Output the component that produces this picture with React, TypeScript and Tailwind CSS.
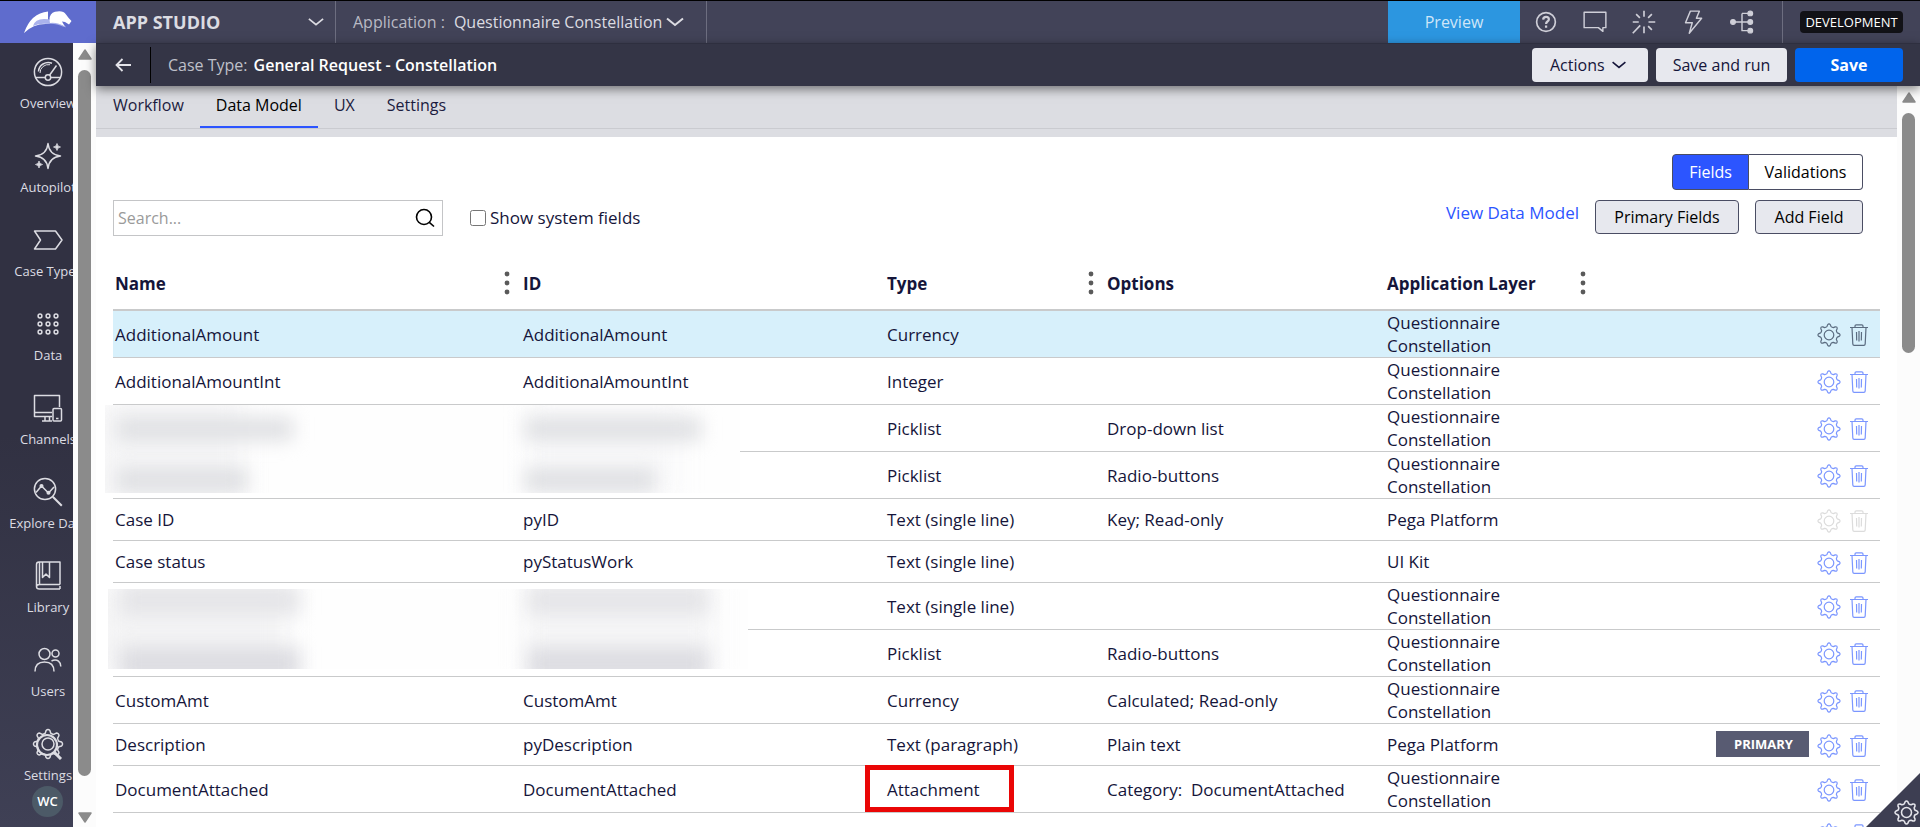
import type { ReactNode } from 'react';

type Tone = 'hover' | 'link' | 'disabled';

interface Field {
  name?: string;
  id?: string;
  type?: string;
  options?: string;
  layer?: string;
  tone?: Tone;
  primary?: boolean;
  marked?: boolean;
  mask?: 'first' | 'second';
}

const QC = 'Questionnaire Constellation';

const fields: Field[] = [
  { name: 'AdditionalAmount', id: 'AdditionalAmount', type: 'Currency', layer: QC, tone: 'hover' },
  { name: 'AdditionalAmountInt', id: 'AdditionalAmountInt', type: 'Integer', layer: QC },
  { type: 'Picklist', options: 'Drop-down list', layer: QC, mask: 'first' },
  { type: 'Picklist', options: 'Radio-buttons', layer: QC },
  { name: 'Case ID', id: 'pyID', type: 'Text (single line)', options: 'Key; Read-only', layer: 'Pega Platform', tone: 'disabled' },
  { name: 'Case status', id: 'pyStatusWork', type: 'Text (single line)', layer: 'UI Kit' },
  { type: 'Text (single line)', layer: QC, mask: 'second' },
  { type: 'Picklist', options: 'Radio-buttons', layer: QC },
  { name: 'CustomAmt', id: 'CustomAmt', type: 'Currency', options: 'Calculated; Read-only', layer: QC },
  { name: 'Description', id: 'pyDescription', type: 'Text (paragraph)', options: 'Plain text', layer: 'Pega Platform', primary: true },
  { name: 'DocumentAttached', id: 'DocumentAttached', type: 'Attachment', options: 'Category:\u00a0 DocumentAttached', layer: QC, marked: true },
  {},
];

const toneClass: Record<Tone, string> = {
  hover: 'text-[#5b6c80]',
  link: 'text-[#7b96ff]',
  disabled: 'text-[#dcdcdc]',
};

function gearPath(c: number, outer: number, inner: number) {
  const pt = (deg: number, r: number) => {
    const a = (deg * Math.PI) / 180;
    return `${(c + r * Math.sin(a)).toFixed(2)} ${(c - r * Math.cos(a)).toFixed(2)}`;
  };
  let d = '';
  for (let i = 0; i < 8; i++) {
    const a = i * 45;
    d += `${i === 0 ? 'M' : 'L'}${pt(a - 14, inner)}`;
    d += `L${pt(a - 8, outer - 0.8)}Q${pt(a, outer + 1)} ${pt(a + 8, outer - 0.8)}L${pt(a + 14, inner)}`;
    d += `Q${pt(a + 22.5, inner - 0.6)} ${pt(a + 31, inner)}`;
  }
  return d + 'Z';
}

const GEAR = gearPath(12, 11, 8.6);

function Gear({ className, stroke = 1.2 }: { className: string; stroke?: number }) {
  return (
    <svg viewBox="0 0 24 24" className={className} fill="none" stroke="currentColor" strokeWidth={stroke} strokeLinejoin="round" aria-hidden="true">
      <path d={GEAR} />
      <circle cx="12" cy="12" r="4.8" />
    </svg>
  );
}

function Trash() {
  return (
    <svg viewBox="0 0 20 24" className="h-6 w-5" fill="none" stroke="currentColor" strokeWidth="1.2" aria-hidden="true">
      <path d="M1 4.5h18M6 4.5V3q0-1.2 1.2-1.2h5.6Q14 1.8 14 3v1.5M3 4.5l.8 16.4q.1 1.4 1.3 1.4h9.8q1.2 0 1.3-1.4L17 4.5M7.5 9l.2 8.5M10 8v10.5M12.5 9l-.2 8.5" />
    </svg>
  );
}

function Chevron({ className }: { className: string }) {
  return (
    <svg viewBox="0 0 18 10" className={className} fill="none" stroke="currentColor" strokeWidth="2" aria-hidden="true">
      <path d="M1 1.5l8 6.5 8-6.5" />
    </svg>
  );
}

function LineIcon({ children, className = 'size-8' }: { children: ReactNode; className?: string }) {
  return (
    <svg viewBox="0 0 32 32" className={className} fill="none" stroke="currentColor" strokeWidth="1.5" strokeLinejoin="round" aria-hidden="true">
      {children}
    </svg>
  );
}

const nav: { label: string; icon: ReactNode }[] = [
  {
    label: 'Overview',
    icon: (
      <>
        <circle cx="16" cy="16" r="13.6" />
        <path d="M3.5 21.5h9.8M18.7 21.5h9.8M17.5 19.2L24.5 9.5M6.500 15.5q.3-5 4.5-7.500t9-.8" />
        <path d="M8 17q0-4 3-6.5t7-1.8" strokeWidth="1" />
        <circle cx="16" cy="21.5" r="2.7" />
      </>
    ),
  },
  {
    label: 'Autopilot',
    icon: (
      <>
        <path d="M16 3.5q1.2 11.3 12.5 12.5Q17.2 17.2 16 28.5 14.8 17.2 3.5 16 14.8 14.8 16 3.5z" />
        <path d="M25 3.5q.3 3.2 3.5 3.5-3.2.3-3.5 3.5-.3-3.2-3.5-3.5 3.2-.3 3.5-3.5zM7 21q.3 3.2 3.5 3.5-3.2.3-3.5 3.5-.3-3.2-3.5-3.5Q6.7 24.2 7 21z" fill="currentColor" strokeWidth="0.8" />
      </>
    ),
  },
  { label: 'Case Types', icon: <path d="M2.5 7h21l6.5 9-6.5 9h-21l6-9z" /> },
  {
    label: 'Data',
    icon: (
      <>
        {[8, 16, 24].map((y) => [8, 16, 24].map((x) => <circle key={`${x}-${y}`} cx={x} cy={y} r="1.9" />))}
      </>
    ),
  },
  {
    label: 'Channels',
    icon: (
      <>
        <path d="M20 20.5H2.5v-17h25V15M2.5 20v4.5H20M13 24.5v4.5M17.5 24.5v4.5M10 29h10" />
        <rect x="21" y="16.5" width="8.5" height="12.5" rx="1" />
        <path d="M24 26.5h2.5" />
      </>
    ),
  },
  {
    label: 'Explore Data',
    icon: (
      <>
        <circle cx="13" cy="13" r="10.6" />
        <path d="M20.8 20.8l9 9" strokeWidth="2" />
        <path d="M4 16.5L9.500 10l7 7L22 11" />
        <circle cx="9.5" cy="10" r="1.3" fill="currentColor" />
        <circle cx="16.5" cy="16.8" r="1.3" fill="currentColor" />
      </>
    ),
  },
  {
    label: 'Library',
    icon: (
      <path d="M28 24.500H7.500q-3 0-3 2.300t3 2.300H28M4.500 26.500V4.500q0-2.500 2.500-2.500h21v22.500M28 26v3M7.500 2v22.500M10.500 2v15.500l3.500-3.500 3.500 3.500V2" />
    ),
  },
  {
    label: 'Users',
    icon: (
      <>
        <circle cx="12.5" cy="10" r="5.5" />
        <path d="M3 27.5q0-9.5 9.5-9.5t9.5 9.5" />
        <circle cx="23.5" cy="9.5" r="3.5" />
        <path d="M19.5 17q4-2.2 7 .2 2.300 1.800 2.300 5.300" />
      </>
    ),
  },
  {
    label: 'Settings',
    icon: (
      <>
        <path d={gearPath(16, 14.5, 11.2)} />
        <circle cx="16" cy="16" r="6" />
        <circle cx="15" cy="17" r="10" strokeWidth="2.2" />
        <path d="M22 24l7 7" strokeWidth="3" />
      </>
    ),
  },
];

function Arrow({ down = false }: { down?: boolean }) {
  return (
    <svg viewBox="0 0 14 11" className="h-[11px] w-3.5 shrink-0" fill="#8b8b8b" stroke="#8b8b8b" strokeWidth="1.5" strokeLinejoin="round" aria-hidden="true">
      <path d={down ? 'M1 1h12L7 10z' : 'M1 10h12L7 1z'} />
    </svg>
  );
}

function Sidebar() {
  return (
    <aside className="flex w-24 shrink-0">
      <nav className="relative min-w-0 flex-1 overflow-hidden bg-linear-to-b from-[#313142] from-50% to-[#3f4055] text-[#dcdce2]">
        <ul className="flex w-24 flex-col gap-7 pt-[13px]">
          {nav.map((n) => (
            <li key={n.label}>
              <a href="#" className="flex flex-col items-center gap-[6px] text-[13px] leading-[18px] whitespace-nowrap">
                <LineIcon>{n.icon}</LineIcon>
                {n.label}
              </a>
            </li>
          ))}
        </ul>
        <span className="absolute bottom-2.5 left-8 flex size-[31px] items-center justify-center rounded-full bg-[#4c5a67] text-[13px] font-semibold text-white">WC</span>
      </nav>
      <div className="flex w-[23px] shrink-0 flex-col items-center bg-[#fcfcfc] pt-[6px] pb-1">
        <Arrow />
        <div className="mt-[10px] mb-9 w-[13px] flex-1 rounded-full bg-[#8b8b8b]" />
        <Arrow down />
      </div>
    </aside>
  );
}

function ToolButton({ label, children }: { label: string; children: ReactNode }) {
  return (
    <button type="button" aria-label={label} className="flex w-[49px] items-center justify-center">
      <LineIcon className="size-6">{children}</LineIcon>
    </button>
  );
}

function TopBar() {
  return (
    <header className="flex h-[43px] shrink-0 border-t border-black bg-[#424358] text-[#dcdce2]">
      <a href="#" aria-label="Home" className="flex w-24 shrink-0 items-center justify-center bg-[#5f6ccd]">
        <svg viewBox="0 0 48 22" className="h-[22px] w-12" aria-hidden="true">
          <path d="M0 22Q7 2 24 .5V13Q10 12 0 22z" fill="#fff" />
          <path d="M9 15Q11 8 20 8q9 0 14 4.5Q40 14 40 16q-9-4-16-3Q16 12 9 15z" fill="#aab2ec" />
          <path d="M26 12Q24 3 31 .8q8-2 11 2.700 2 3 5.500 6.500L45 13.500l-4-2.500-3-.5q2 4 4 6Q34 11 26 12z" fill="#fff" />
        </svg>
      </a>
      <button type="button" className="flex w-60 items-center justify-between border-r border-[#6d6e80] pr-[11px] pl-[17px] text-[18px] font-bold">
        APP STUDIO
        <Chevron className="h-[10px] w-4" />
      </button>
      <button type="button" className="flex items-center gap-[9px] border-r border-[#6d6e80] pr-[22px] pl-[17px] text-[16px]">
        <span className="text-[#b9bac4]">Application :</span>
        <span className="flex items-center gap-1">
          Questionnaire Constellation
          <Chevron className="h-[10px] w-[18px]" />
        </span>
      </button>
      <div className="flex-1" />
      <button type="button" className="w-[132px] bg-[#2c96e0] text-[16px] text-[#cfe6f8]">Preview</button>
      <div className="flex pl-px text-[#cfcfd8]">
        <ToolButton label="Help">
          <circle cx="16" cy="16" r="12.5" strokeWidth="2.2" />
          <path d="M12.2 12.8q.3-3.6 3.9-3.6 3.7 0 3.7 3.2 0 1.7-1.9 3-1.8 1.2-1.8 3.2M16.1 20.8v3" strokeWidth="3" />
        </ToolButton>
        <ToolButton label="Comments">
          <path d="M1.5 3h29v20.5h-4v5l-6-5h-19z" strokeWidth="1.9" />
        </ToolButton>
        <ToolButton label="Tours">
          <path d="M16 1v8M16 22v9M1 16h8M22 16h9M5.5 5.5L10.5 10.5M26.5 5.5l-5 5M26.5 26.5l-5-5M11 20.5L1 31" strokeWidth="2.2" />
        </ToolButton>
        <ToolButton label="Actions">
          <path d="M12.5 1.5h12l-4 9.5h7L11 31l4-14H6z" strokeWidth="1.9" />
        </ToolButton>
        <ToolButton label="Hierarchy">
          <path d="M5 16h21M16 4.5h10M16 4.5v23h10" strokeWidth="1.9" />
          {[[4, 16], [27, 4.5], [27, 16], [27, 27.5]].map(([x, y]) => (
            <circle key={`${x}-${y}`} cx={x} cy={y} r="3.2" fill="currentColor" />
          ))}
        </ToolButton>
      </div>
      <div className="ml-4 flex items-center border-l border-[#6d6e80] px-[17px]">
        <span className="w-[103px] rounded bg-[#121217] text-center text-[13px] leading-[22px] text-white">DEVELOPMENT</span>
      </div>
    </header>
  );
}

function CaseBar() {
  return (
    <div className="relative z-10 flex h-[43px] shrink-0 items-center border-t border-[#2e2f3f] bg-[#343546] pr-[17px] text-[16px] shadow-[0_3px_10px_rgba(0,0,0,0.5)]">
      <button type="button" aria-label="Back" className="flex w-[54px] items-center justify-center text-[#e4e4ea]">
        <svg viewBox="0 0 16 14" className="h-3.5 w-4" fill="none" stroke="currentColor" strokeWidth="1.8" aria-hidden="true">
          <path d="M16 7H1.5M7.5 1l-6 6 6 6" />
        </svg>
      </button>
      <div className="h-9 border-l border-black" />
      <h1 className="flex items-center gap-[6px] pl-[17px]">
        <span className="text-[#bfc0c9]">Case Type:</span>
        <span className="font-semibold text-white">General Request - Constellation</span>
      </h1>
      <div className="ml-auto flex gap-2">
        <button type="button" className="flex h-[34px] w-[116px] items-center gap-[6px] rounded-sm bg-[#e7e8ee] pl-[18px] text-[#15153a]">
          Actions
          <Chevron className="h-2 w-4" />
        </button>
        <button type="button" className="h-[34px] w-[131px] rounded-sm bg-[#e7e8ee] text-[#15153a]">Save and run</button>
        <button type="button" className="h-[34px] w-[108px] rounded-sm bg-[#0064ec] font-bold text-white">Save</button>
      </div>
    </div>
  );
}

function Tabs() {
  return (
    <div className="shrink-0 bg-[#dcdde2] pb-2">
      <div className="flex h-[43px] border-b border-[#cacbd0] pl-px text-[16px] text-[#1c1c40]">
        {['Workflow', 'Data Model', 'UX', 'Settings'].map((t) => (
          <a
            key={t}
            href="#"
            className={
              t === 'Data Model'
                ? 'h-[42px] border-b-2 border-[#2c55ff] px-4 leading-[38px] text-black'
                : 'h-[42px] px-4 leading-[38px]'
            }
          >
            {t}
          </a>
        ))}
      </div>
    </div>
  );
}

function Dots() {
  return (
    <svg viewBox="0 0 6 24" className="h-6 w-[6px] shrink-0" fill="#5a5a5a" aria-hidden="true">
      <circle cx="3" cy="3" r="2.4" />
      <circle cx="3" cy="12" r="2.4" />
      <circle cx="3" cy="21" r="2.4" />
    </svg>
  );
}

function Head({ label, dots = false, width }: { label: string; dots?: boolean; width: string }) {
  return (
    <th scope="col" className={width}>
      <div className="flex h-[52px] items-center justify-between pr-[11px] pl-0.5">
        {label}
        {dots && <Dots />}
      </div>
    </th>
  );
}

function Mask({ second }: { second?: boolean }) {
  return second ? (
    <div aria-hidden="true" className="absolute top-[6px] -left-[5px] h-20 w-[640px] overflow-hidden bg-[#fefefe]">
      <div className="absolute -top-2 -left-3 h-24 w-[190px] bg-[#f4f4f5] blur-[12px]" />
      <div className="absolute -top-2 left-[416px] h-24 w-[190px] bg-[#f6f6f7] blur-[12px]" />
      <div className="absolute -top-1 left-[12px] h-[30px] w-[180px] bg-[#e5e5e8] blur-[9px]" />
      <div className="absolute top-[58px] left-[12px] h-[34px] w-[180px] bg-[#dddde2] blur-[9px]" />
      <div className="absolute -top-1 left-[420px] h-[30px] w-[180px] bg-[#e5e5e8] blur-[9px]" />
      <div className="absolute top-[58px] left-[420px] h-[34px] w-[180px] bg-[#dddde2] blur-[9px]" />
    </div>
  ) : (
    <div aria-hidden="true" className="absolute top-0 -left-2 h-[88px] w-[635px] overflow-hidden bg-[#fefefe]">
      <div className="absolute -top-2 -left-3 h-28 w-[150px] bg-[#f6f6f7] blur-[12px]" />
      <div className="absolute top-0 left-[424px] h-24 w-[150px] bg-[#f9f9fa] blur-[12px]" />
      <div className="absolute top-[12px] left-[12px] h-6 w-[176px] bg-[#e0e1e4] blur-[9px]" />
      <div className="absolute top-[63px] left-[12px] h-6 w-[130px] bg-[#dfe0e3] blur-[9px]" />
      <div className="absolute top-[12px] left-[420px] h-6 w-[176px] bg-[#e0e1e4] blur-[9px]" />
      <div className="absolute top-[63px] left-[420px] h-6 w-[130px] bg-[#dfe0e3] blur-[9px]" />
    </div>
  );
}

function Row({ f }: { f: Field }) {
  const tone = f.tone ?? 'link';
  const tall = f.layer === QC;
  return (
    <tr className={`border-b border-[#c9cacb] ${tall ? 'h-[47px]' : 'h-[42px]'} ${tone === 'hover' ? 'bg-[#d7f0fb]' : ''}`}>
      <td className="relative p-0 pl-0.5">
        {f.name}
        {f.mask && <Mask second={f.mask === 'second'} />}
      </td>
      <td className="p-0 pl-0.5">{f.id}</td>
      <td className="relative p-0 pl-0.5">
        {f.type}
        {f.marked && <span className="absolute -top-px -left-5 h-[47px] w-[149px] border-[5px] border-[#ea0606]" />}
      </td>
      <td className="p-0 pl-0.5">{f.options}</td>
      <td className="p-0 pl-0.5">
        <div className="max-w-[140px]">{f.layer}</div>
      </td>
      <td className="p-0">
        <div className={`flex items-center justify-end gap-2 pt-0.5 pr-[11px] ${toneClass[tone]}`}>
          {f.primary && (
            <span className="-mt-1 h-[26px] bg-[#585b72] pr-4 pl-[18px] text-[13px] leading-[26px] font-bold text-white">PRIMARY</span>
          )}
          <button type="button" aria-label="Field settings" disabled={tone === 'disabled'}>
            <Gear className="size-6" />
          </button>
          <button type="button" aria-label="Delete field" disabled={tone === 'disabled'}>
            <Trash />
          </button>
        </div>
      </td>
    </tr>
  );
}

function DataModel() {
  return (
    <main className="min-w-0 flex-1 overflow-hidden bg-white px-[17px] pt-[17px] text-[#15153a]">
      <div className="flex justify-end pr-[17px] text-[16px]">
        <button type="button" className="h-9 w-[77px] rounded-l-sm border border-[#4a4d63] bg-[#2c55ff] text-white">Fields</button>
        <button type="button" className="h-9 w-[114px] rounded-r-sm border border-l-0 border-[#4a4d63] text-black">Validations</button>
      </div>
      <div className="mt-[10px] flex items-start pr-[17px] text-[16px]">
        <div className="flex h-9 w-[330px] items-center border border-[#c4c5c7] pr-[7px] pl-1">
          <input aria-label="Search" placeholder="Search..." className="min-w-0 flex-1 outline-none placeholder:text-[#9a9a9a]" />
          <svg viewBox="0 0 20 20" className="size-5" fill="none" stroke="#000" strokeWidth="1.6" aria-hidden="true">
            <circle cx="9" cy="9" r="7.5" />
            <path d="M14.3 14.3l4.7 4.2" />
          </svg>
        </div>
        <label className="ml-[27px] flex h-9 items-center gap-1 text-[17px]">
          <input type="checkbox" className="size-4 rounded-sm" />
          Show system fields
        </label>
        <a href="#" className="ml-auto text-[17px] leading-[26px] text-[#2c55ff]">View Data Model</a>
        <button type="button" className="ml-4 h-[34px] w-36 rounded-sm border border-[#4a4d63] bg-[#e7e8ee] text-black">Primary Fields</button>
        <button type="button" className="ml-4 h-[34px] w-[108px] rounded-sm border border-[#4a4d63] bg-[#e7e8ee] text-black">Add Field</button>
      </div>
      <table className="mt-[21px] w-full table-fixed border-collapse text-left text-[17px] leading-[23px]">
        <thead>
          <tr className="border-b-2 border-[#c9cacb]">
            <Head label="Name" dots width="w-[408px]" />
            <Head label="ID" width="w-[364px]" />
            <Head label="Type" dots width="w-[220px]" />
            <Head label="Options" width="w-[280px]" />
            <Head label="Application Layer" dots width="w-[212px]" />
            <th scope="col" aria-label="Actions" />
          </tr>
        </thead>
        <tbody>
          {fields.map((f, i) => (
            <Row key={i} f={f} />
          ))}
        </tbody>
      </table>
    </main>
  );
}

export default function App() {
  return (
    <div className="relative flex h-screen flex-col overflow-hidden bg-white font-['Open_Sans','Noto_Sans',sans-serif]">
      <TopBar />
      <div className="flex min-h-0 flex-1">
        <Sidebar />
        <div className="flex min-w-0 flex-1 flex-col">
          <CaseBar />
          <div className="flex min-h-0 flex-1">
            <div className="flex min-w-0 flex-1 flex-col">
              <Tabs />
              <DataModel />
            </div>
            <div className="flex w-[23px] shrink-0 flex-col items-center gap-[10px] bg-[#fcfcfc] pt-[6px]">
              <Arrow />
              <div className="h-[240px] w-[13px] rounded-full bg-[#8b8b8b]" />
            </div>
          </div>
        </div>
      </div>
      <button type="button" aria-label="Tools" className="absolute right-0 bottom-0 z-20 h-[54px] w-[54px] bg-[#3d3e52] text-[#e4e4ea] [clip-path:polygon(100%_0,100%_100%,0_100%)]">
        <Gear className="absolute right-px bottom-[2px] size-[25px]" stroke={1.5} />
      </button>
    </div>
  );
}
